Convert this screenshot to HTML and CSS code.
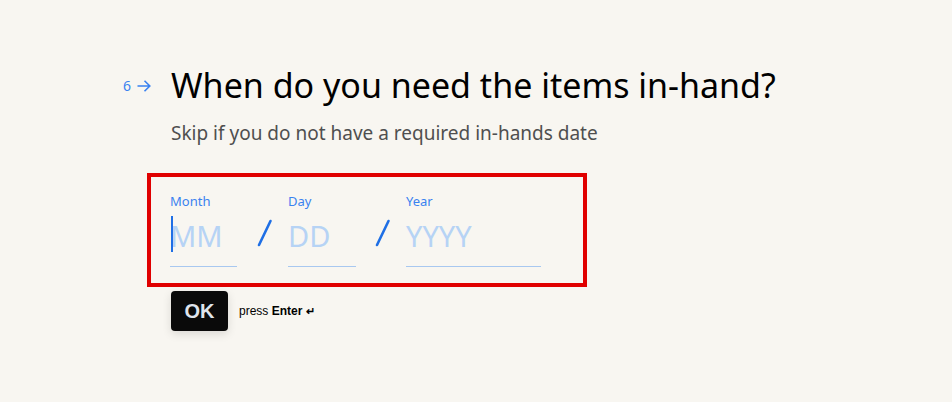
FILE: index.html
```html
<!DOCTYPE html>
<html lang="en">
<head>
<meta charset="utf-8">
<title>In-hand date</title>
<link rel="stylesheet" href="styles.css">
</head>
<body>
<main class="page">
  <section class="question">
    <div class="num">6<svg class="arrow" width="14" height="12" viewBox="0 0 14 12" aria-hidden="true"><path d="M0.5 6H12.8M7.5 0.8L12.8 6L7.5 11.2" fill="none" stroke="#3a82f0" stroke-width="1.6"/></svg></div>
    <h1 class="title">When do you need the items in-hand?</h1>
    <p class="subtitle">Skip if you do not have a required in-hands date</p>
    <div class="datebox">
      <div class="fields">
        <div class="field month">
          <span class="label">Month</span>
          <div class="input"><span class="caret"></span><span class="ph">MM</span></div>
        </div>
        <div class="slash"><svg width="51" height="30" viewBox="0 0 51 30" aria-hidden="true"><path d="M33.5 3L22 27" stroke="#1f6fe5" stroke-width="2.6" stroke-linecap="round"/></svg></div>
        <div class="field day">
          <span class="label">Day</span>
          <div class="input"><span class="ph">DD</span></div>
        </div>
        <div class="slash"><svg width="50" height="30" viewBox="0 0 50 30" aria-hidden="true"><path d="M32.5 3L21 27" stroke="#1f6fe5" stroke-width="2.6" stroke-linecap="round"/></svg></div>
        <div class="field year">
          <span class="label">Year</span>
          <div class="input"><span class="ph">YYYY</span></div>
        </div>
      </div>
    </div>
    <div class="actions">
      <button class="ok">OK</button>
      <span class="hint">press <b>Enter</b> <span class="enter">↵</span></span>
    </div>
  </section>
</main>
</body>
</html>
```
FILE: styles.css
```css
html, body {
  margin: 0;
  padding: 0;
  background: #f8f6f1;
  height: 100%;
}
.page {
  padding: 62px 0 0 171px;
  font-family: "Noto Sans", "Open Sans", sans-serif;
}
.question {
  position: relative;
}
.num {
  position: absolute;
  left: -48px;
  top: 17px;
  font-size: 14px;
  line-height: 14px;
  color: #3a82f0;
  display: flex;
  align-items: center;
  gap: 6px;
}
.title {
  margin: 0;
  font-size: 34px;
  font-weight: 400;
  line-height: 46px;
  color: #000;
}
.subtitle {
  margin: 12px 0 0;
  font-size: 19px;
  line-height: 26px;
  color: #4f4f4f;
}
.datebox {
  margin: 27px 0 0 -24px;
  width: 440px;
  height: 114px;
  box-sizing: border-box;
  border: 4px solid #e00000;
  padding: 15px 0 0 19px;
}
.fields {
  display: flex;
  align-items: flex-start;
}
.field {
  display: flex;
  flex-direction: column;
}
.month { width: 67px; }
.day { width: 68px; }
.year { width: 135px; }
.label {
  font-size: 13px;
  line-height: 18px;
  color: #3a82f0;
}
.input {
  position: relative;
  height: 48px;
  margin-top: 2px;
  padding-top: 6px;
  box-sizing: content-box;
  border-bottom: 1px solid #a8c8f0;
  display: flex;
  align-items: flex-start;
}
.ph {
  font-size: 29px;
  color: #b6d3f5;
  line-height: 36px;
}
.caret {
  position: absolute;
  left: 1px;
  top: 4px;
  width: 2px;
  height: 36px;
  background: #1f6fe5;
}
.slash {
  padding-top: 26px;
  line-height: 0;
}
.actions {
  display: flex;
  align-items: center;
  margin-top: 4px;
  gap: 11px;
}
.ok {
  width: 57px;
  height: 40px;
  border: none;
  border-radius: 4px;
  background: #0a0a0a;
  color: #dfe4ec;
  font-family: "Liberation Sans", Arial, sans-serif;
  font-size: 20px;
  font-weight: 700;
  box-shadow: 0 3px 10px rgba(0,0,0,0.12);
  padding: 0;
}
.hint {
  font-family: "Liberation Sans", Arial, sans-serif;
  font-size: 12px;
  color: #000;
}
.enter {
  font-size: 11px;
  font-weight: 700;
}
```
